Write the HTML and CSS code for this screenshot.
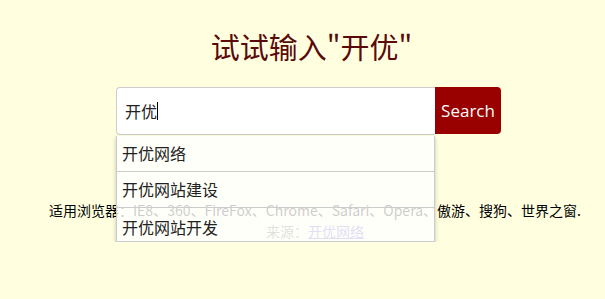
FILE: index.html
```html
<!DOCTYPE html>
<html lang="zh-CN">
<head>
<meta charset="utf-8">
<title>试试输入"开优"</title>
<link rel="stylesheet" href="styles.css">
</head>
<body>
<h1 class="title">试试输入"开优"</h1>
<div class="search">
  <div class="field">
    <div class="input"><span>开优</span><span class="caret"></span></div>
    <ul class="suggest">
      <li>开优网络</li>
      <li>开优网站建设</li>
      <li>开优网站开发</li>
    </ul>
  </div>
  <button class="btn">Search</button>
</div>
<div class="info">
  <p>适用浏览器：IE8、360、FireFox、Chrome、Safari、Opera、傲游、搜狗、世界之窗.</p>
  <p class="src">来源：<a href="#">开优网络</a></p>
</div>
</body>
</html>
```
FILE: styles.css
```css
html, body {
  margin: 0;
  padding: 0;
}
body {
  background: #ffffe0;
  font-family: "Noto Sans CJK SC", "Noto Sans", sans-serif;
  color: #000;
}
.title {
  margin: 26px 0 0;
  padding-left: 18px;
  font-size: 29px;
  line-height: 40px;
  font-weight: normal;
  text-align: center;
  color: #5a0a0a;
}
.search {
  display: flex;
  width: 385px;
  margin: 21px auto 0 116px;
  height: 48px;
}
.field {
  position: relative;
  flex: 1;
}
.input {
  box-sizing: border-box;
  height: 48px;
  background: #fff;
  border: 1px solid #ccc;
  border-right: none;
  border-radius: 4px 0 0 4px;
  padding-left: 8px;
  display: flex;
  align-items: center;
  font-size: 16px;
  color: #222;
}
.caret {
  display: inline-block;
  width: 1px;
  height: 18px;
  background: #000;
}
.btn {
  width: 66px;
  height: 47px;
  border: none;
  border-radius: 0 4px 4px 0;
  background: #990000;
  color: #fff;
  font-family: "Open Sans", sans-serif;
  font-size: 17px;
  padding: 0;
}
.suggest {
  position: absolute;
  left: 0;
  right: 0;
  top: 49px;
  margin: 0;
  padding: 0;
  list-style: none;
  background: rgba(255, 255, 255, 0.8);
  border: 1px solid #ccc;
  border-top: none;
  box-shadow: 0 2px 4px rgba(0, 0, 0, 0.25);
  z-index: 2;
}
.suggest li {
  height: 35px;
  line-height: 35px;
  padding-left: 5px;
  font-size: 16px;
  color: #222;
  border-bottom: 1px solid #ccc;
}
.suggest li:last-child {
  border-bottom: none;
  height: 33px;
  line-height: 38px;
}
.info {
  margin-top: 65px;
  padding-left: 25px;
  text-align: center;
  font-size: 14px;
  line-height: 21px;
}
.info p {
  margin: 0;
}
.src {
  color: #666;
}
.src a {
  color: #6a5acd;
}
```
